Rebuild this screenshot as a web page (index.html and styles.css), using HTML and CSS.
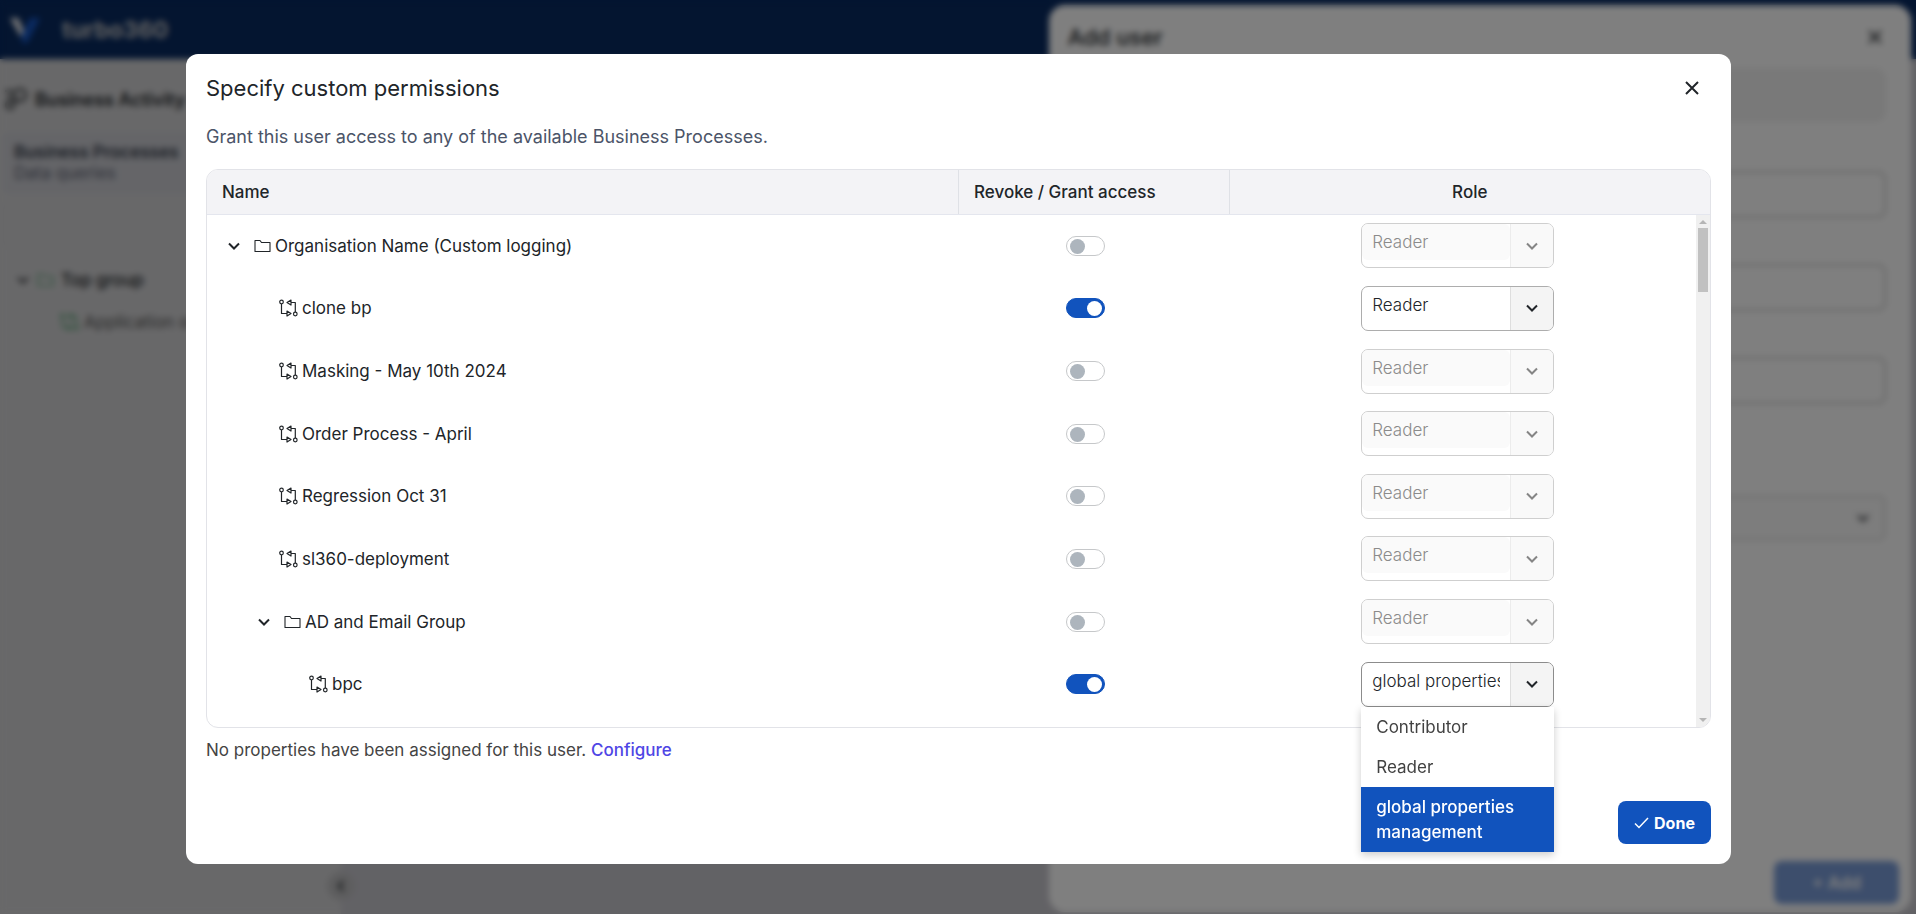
FILE: index.html
```html
<!DOCTYPE html>
<html lang="en">
<head>
<meta charset="utf-8">
<title>Specify custom permissions</title>
<link rel="stylesheet" href="styles.css">
</head>
<body>
<svg class="sprite" aria-hidden="true">
  <symbol id="chevron" viewBox="0 0 14 14"><path d="M2 4.5 7 9.5 12 4.5" fill="none" stroke="currentColor" stroke-width="2"/></symbol>
  <symbol id="folder" viewBox="0 0 17 14"><path d="M1 12V1.5H6L7.5 3.5H16V12.5H1Z" fill="none" stroke="currentColor" stroke-width="1.1" stroke-linejoin="round"/></symbol>
  <symbol id="process" viewBox="0 0 19 18"><g fill="none" stroke="currentColor" stroke-width="1.2" stroke-linejoin="round"><circle cx="2.5" cy="3" r="1.8"/><path d="M2.5 5V14.5H8M8 12 12 14.5 8 17ZM16.3 13V3.5H12M12 1 8 3.5 12 6Z"/><circle cx="16.3" cy="15" r="1.8"/></g></symbol>
  <symbol id="close" viewBox="0 0 16 16"><path d="M2 2 14 14M14 2 2 14" fill="none" stroke="currentColor" stroke-width="2"/></symbol>
</svg>

<div class="app">
  <header class="topbar">
    <svg class="logo" viewBox="0 0 30 26"><path d="M0 1H8L14 14 11 20Z" fill="#f2f2f2"/><path d="M20 1H30L17 26H13L11 20Z" fill="#1656c4"/></svg>
    <span class="brand">turbo360</span>
  </header>
  <div class="workspace">
    <nav class="sidebar">
      <div class="side-title">
        <svg class="side-icon" viewBox="0 0 24 24" fill="none" stroke="currentColor" stroke-width="2"><circle cx="7" cy="18" r="4"/><circle cx="17" cy="8" r="6"/><path d="M2 4H10M4 10H9M11 15 14 13"/></svg>
        <span>Business Activity</span>
      </div>
      <a class="side-section" href="#"><strong>Business Processes</strong><span>Data queries</span></a>
      <div class="side-search"></div>
      <div class="side-group"><svg class="chevron"><use href="#chevron"/></svg><svg class="folder green"><use href="#folder"/></svg><span>Top group</span></div>
      <div class="side-leaf"><svg class="process green"><use href="#process"/></svg><span>Application one</span></div>
      <button class="collapse" type="button" aria-label="Collapse"><svg class="chevron left"><use href="#chevron"/></svg></button>
    </nav>
    <main class="main"></main>
  </div>
</div>

<aside class="drawer" aria-label="Add user">
  <div class="drawer-head"><h2>Add user</h2><button class="close" type="button" aria-label="Close"><svg class="x"><use href="#close"/></svg></button></div>
  <div class="drawer-note"></div>
  <input class="drawer-input" type="text" aria-label="Name">
  <input class="drawer-input" type="text" aria-label="Email">
  <input class="drawer-input" type="text" aria-label="Title">
  <div class="drawer-select"><svg class="chevron"><use href="#chevron"/></svg></div>
  <button class="add" type="button">+ Add</button>
</aside>

<div class="overlay">
  <section class="dialog" role="dialog" aria-labelledby="dialog-title">
    <div class="dialog-head">
      <h1 id="dialog-title">Specify custom permissions</h1>
      <button class="close" type="button" aria-label="Close"><svg class="x"><use href="#close"/></svg></button>
    </div>
    <p class="intro">Grant this user access to any of the available Business Processes.</p>

    <div class="grid">
      <table class="grid-head">
        <thead><tr><th class="c-name">Name</th><th class="c-access">Revoke / Grant access</th><th class="c-role">Role</th></tr></thead>
      </table>
      <div class="grid-body">
        <table class="rows">
          <tbody>
            <tr>
              <td class="c-name"><div class="node level-0"><button class="expander" type="button" aria-label="Collapse"><svg class="chevron"><use href="#chevron"/></svg></button><svg class="folder"><use href="#folder"/></svg><span>Organisation Name (Custom logging)</span></div></td>
              <td class="c-access"><input class="switch" type="checkbox" aria-label="Access to Organisation Name"></td>
              <td class="c-role"><div class="combo off"><select aria-label="Role" disabled><option>Reader</option></select><span class="drop"><svg class="chevron"><use href="#chevron"/></svg></span></div></td>
            </tr>
            <tr>
              <td class="c-name"><div class="node level-1 leaf"><svg class="process"><use href="#process"/></svg><span>clone bp</span></div></td>
              <td class="c-access"><input class="switch" type="checkbox" aria-label="Access to clone bp" checked></td>
              <td class="c-role"><div class="combo"><select aria-label="Role"><option>Reader</option></select><span class="drop"><svg class="chevron"><use href="#chevron"/></svg></span></div></td>
            </tr>
            <tr>
              <td class="c-name"><div class="node level-1 leaf"><svg class="process"><use href="#process"/></svg><span>Masking - May 10th 2024</span></div></td>
              <td class="c-access"><input class="switch" type="checkbox" aria-label="Access to Masking"></td>
              <td class="c-role"><div class="combo off"><select aria-label="Role" disabled><option>Reader</option></select><span class="drop"><svg class="chevron"><use href="#chevron"/></svg></span></div></td>
            </tr>
            <tr>
              <td class="c-name"><div class="node level-1 leaf"><svg class="process"><use href="#process"/></svg><span>Order Process - April</span></div></td>
              <td class="c-access"><input class="switch" type="checkbox" aria-label="Access to Order Process"></td>
              <td class="c-role"><div class="combo off"><select aria-label="Role" disabled><option>Reader</option></select><span class="drop"><svg class="chevron"><use href="#chevron"/></svg></span></div></td>
            </tr>
            <tr>
              <td class="c-name"><div class="node level-1 leaf"><svg class="process"><use href="#process"/></svg><span>Regression Oct 31</span></div></td>
              <td class="c-access"><input class="switch" type="checkbox" aria-label="Access to Regression"></td>
              <td class="c-role"><div class="combo off"><select aria-label="Role" disabled><option>Reader</option></select><span class="drop"><svg class="chevron"><use href="#chevron"/></svg></span></div></td>
            </tr>
            <tr>
              <td class="c-name"><div class="node level-1 leaf"><svg class="process"><use href="#process"/></svg><span>sl360-deployment</span></div></td>
              <td class="c-access"><input class="switch" type="checkbox" aria-label="Access to sl360-deployment"></td>
              <td class="c-role"><div class="combo off"><select aria-label="Role" disabled><option>Reader</option></select><span class="drop"><svg class="chevron"><use href="#chevron"/></svg></span></div></td>
            </tr>
            <tr>
              <td class="c-name"><div class="node level-1"><button class="expander" type="button" aria-label="Collapse"><svg class="chevron"><use href="#chevron"/></svg></button><svg class="folder"><use href="#folder"/></svg><span>AD and Email Group</span></div></td>
              <td class="c-access"><input class="switch" type="checkbox" aria-label="Access to AD and Email Group"></td>
              <td class="c-role"><div class="combo off"><select aria-label="Role" disabled><option>Reader</option></select><span class="drop"><svg class="chevron"><use href="#chevron"/></svg></span></div></td>
            </tr>
            <tr>
              <td class="c-name"><div class="node level-2 leaf"><svg class="process"><use href="#process"/></svg><span>bpc</span></div></td>
              <td class="c-access"><input class="switch" type="checkbox" aria-label="Access to bpc" checked></td>
              <td class="c-role"><div class="combo open"><select aria-label="Role"><option>global properties management</option></select><span class="drop"><svg class="chevron"><use href="#chevron"/></svg></span>
                <ul class="menu" role="listbox" aria-label="Roles"><li role="option">Contributor</li><li role="option">Reader</li><li role="option" aria-selected="true">global properties management</li></ul></div></td>
            </tr>
          </tbody>
        </table>
        <div class="scrollbar" aria-hidden="true"><i class="up"></i><i class="thumb"></i><i class="down"></i></div>
      </div>
    </div>

    <p class="props">No properties have been assigned for this user. <a href="#">Configure</a></p>
    <div class="actions"><button class="done" type="button"><svg class="check" viewBox="0 0 15 12"><path d="M1 6.5 5 10.5 14 1" fill="none" stroke="currentColor" stroke-width="1.5"/></svg>Done</button></div>
  </section>
</div>
</body>
</html>
```
FILE: styles.css
```css
* { box-sizing: border-box; }
body { margin: 0; height: 100vh; overflow: hidden; font-family: Inter, "Noto Sans", sans-serif; font-size: 17px; color: #212529; }
button, input, select { font: inherit; color: inherit; margin: 0; }
button { border: 0; padding: 0; background: none; }
h1, h2, p, ul { margin: 0; padding: 0; }
svg { display: block; flex: none; }
.sprite { position: absolute; width: 0; height: 0; }
.chevron { width: 14px; height: 14px; }
.folder { width: 17px; height: 14px; }
.process { width: 19px; height: 18px; }
.x { width: 16px; height: 16px; }
.green { color: #409860; }

/* Application shell */
.app { height: 100%; display: flex; flex-direction: column; background: #d1d1d3; }
.topbar { height: 59px; flex: none; display: flex; align-items: center; gap: 22px; padding: 0 10px; background: #082a60; color: #c4c4c4; }
.logo { width: 30px; height: 26px; }
.brand { font-size: 23px; font-weight: 700; }
.workspace { flex: 1; display: flex; }
.sidebar { position: relative; width: 341px; padding: 28px 3px; }
.main { flex: 1; background: #c5c4cb; }
.side-title { display: flex; align-items: center; gap: 8px; height: 24px; font-size: 18px; font-weight: 600; }
.side-icon { width: 24px; height: 24px; }
.side-section { display: flex; flex-direction: column; justify-content: center; height: 62px; margin-top: 21px; padding-left: 11px; line-height: 21px; border-radius: 6px; background: #cacbd1; color: #333a48; text-decoration: none; }
.side-section strong { font-weight: 600; }
.side-section span { color: #5a6070; }
.side-search { height: 46px; margin-top: 8px; border: 1px solid #c8c9cd; border-radius: 8px; }
.side-group { display: flex; align-items: center; gap: 7px; height: 24px; margin: 20px 0 0 13px; font-weight: 500; }
.side-leaf { display: flex; align-items: center; gap: 5px; height: 24px; margin: 18px 0 0 57px; color: #555; }
.collapse { position: absolute; right: -14px; bottom: 14px; width: 28px; height: 28px; display: grid; place-items: center; border-radius: 50%; background: #bcbcbe; }
.left { transform: rotate(90deg); }

/* Add user drawer */
.drawer { position: fixed; top: 5px; right: 5px; bottom: 2px; width: 45%; display: flex; flex-direction: column; padding: 16px 25px 8px 19px; border-radius: 16px; background: #fff; }
.drawer-head { display: flex; justify-content: space-between; align-items: center; height: 32px; padding-right: 3px; }
.drawer-head h2 { font-size: 22px; font-weight: 500; }
.drawer-note { height: 54px; margin-top: 15px; border-radius: 10px; background: #f2f2f2; }
.drawer-input { height: 47px; margin-top: 46px; border: 2px solid #ccc; border-radius: 8px; background: #fff; }
.drawer-note + .drawer-input { margin-top: 49px; }
.drawer-select { display: flex; justify-content: flex-end; align-items: center; height: 46px; margin-top: 91px; padding-right: 14px; border: 2px solid #dedede; border-radius: 8px; background: #fafafa; }
.add { height: 43px; width: 125px; margin: auto -13px 0 0; align-self: flex-end; border-radius: 8px; background: #7a9cd8; color: #fff; font-weight: 600; }

/* Dialog */
.overlay { position: fixed; inset: 0; display: flex; padding: 54px 185px 50px 186px; background: rgba(0, 0, 0, .5); backdrop-filter: blur(3px); }
.dialog { flex: 1; display: flex; flex-direction: column; padding: 20px; border-radius: 12px; background: #fff; }
.dialog-head { display: flex; justify-content: space-between; align-items: center; height: 28px; padding-right: 11px; }
.dialog-head h1 { font-size: 22px; font-weight: 400; }
.intro { margin-top: 22px; font-size: 18px; line-height: 26px; color: #4b5468; }

.grid { margin-top: 19px; border: 1px solid #e2e3e8; border-radius: 12px; }
table { width: 100%; table-layout: fixed; border-collapse: collapse; }
.c-name { width: 50%; text-align: left; }
.c-access { width: 18%; }
.c-role { width: 32%; }
th { height: 44px; padding: 0 15px; font-weight: 500; background: #f3f3f6; border-bottom: 1px solid #e4e6ee; }
th + th { border-left: 1px solid #dfe1e6; }
th:first-child { border-top-left-radius: 11px; }
th:last-child { border-top-right-radius: 11px; }
th.c-access { text-align: left; }
.grid-body { display: flex; align-items: stretch; height: 512px; }
.rows { height: 501px; flex: 1; }
td { padding: 0; text-align: center; vertical-align: middle; }
.node { display: flex; align-items: center; gap: 4px; line-height: 24px; }
.level-0 { padding-left: 20px; }
.level-1 { padding-left: 50px; }
.level-2 { padding-left: 80px; }
.level-1.leaf { padding-left: 72px; }
.level-2.leaf { padding-left: 102px; }
.expander { margin-right: 9px; }

.switch { appearance: none; display: block; width: 39px; height: 20px; margin: 0 auto; padding: 2px; border: 1px solid #c6c8ca; border-radius: 10px; background: #fff; }
.switch::before { content: ""; display: block; width: 15px; height: 15px; margin-left: 1px; border-radius: 50%; background: #adb5bd; }
.switch:checked { background: #1153bd; border-color: #1153bd; }
.switch:checked::before { margin-left: 18px; background: #fff; }

.combo { position: relative; display: flex; width: 193px; height: 45px; margin: 0 auto; border: 1px solid #adadad; border-radius: 7px; background: #fff; text-align: left; }
.combo select { appearance: none; flex: 1; min-width: 0; height: 36px; padding: 0 10px; border: 0; border-radius: 6px; background: transparent; font-weight: 300; text-overflow: clip; }
.combo .drop { width: 43px; display: grid; place-items: center; border-left: 1px solid #dedede; border-radius: 0 6px 6px 0; background: #f4f4f4; }
.combo.off { border-color: #cfcfcf; }
.combo.off select { background: #fafafa; color: #8b8b8b; opacity: 1; }
.combo.off .drop { background: #f9f9f9; border-color: #ececec; color: #858585; }
.combo.open { border-color: #8c8c8c; }
.menu { position: absolute; z-index: 2; top: 44px; left: -1px; right: -1px; list-style: none; background: #fff; box-shadow: 0 3px 8px rgba(0, 0, 0, .2); }
.menu li { padding: 8px 15px 7px; line-height: 25px; color: #424242; }
.menu li[aria-selected="true"] { background: #1153bd; color: #fff; font-weight: 500; }

.scrollbar { width: 14px; display: flex; flex-direction: column; align-items: center; padding: 5px 0; border-bottom-right-radius: 11px; background: #f0f0f0; }
.scrollbar i { display: block; }
.up, .down { border: 4px solid transparent; }
.up { border-top-width: 0; border-bottom-color: #b5b5b5; }
.down { margin-top: auto; border-bottom-width: 0; border-top-color: #b5b5b5; }
.thumb { width: 10px; height: 64px; margin-top: 4px; background: #c1c1c1; }

.props { margin-top: 10px; line-height: 24px; color: #444; }
.props a { color: #4f46e5; font-weight: 500; text-decoration: none; }
.actions { display: flex; justify-content: flex-end; margin-top: auto; }
.done { display: flex; align-items: center; justify-content: center; gap: 5px; width: 93px; height: 43px; border-radius: 8px; background: #1153bd; color: #fff; font-size: 16px; font-weight: 700; }
.check { width: 15px; height: 12px; }
```
